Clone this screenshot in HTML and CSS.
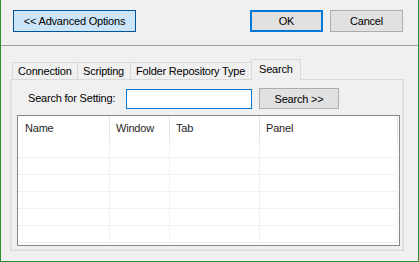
FILE: index.html
```html
<!DOCTYPE html>
<html lang="en">
<head>
    <meta charset="UTF-8">
    <title>Advanced Options</title>
    <link rel="stylesheet" href="styles.css">
</head>
<body>
    <div class="window">
        <!-- Dialog buttons -->
        <div class="topbar">
            <button class="btn btn-toggle">&lt;&lt; Advanced Options</button>
            <div class="actions">
                <button class="btn btn-default">OK</button>
                <button class="btn">Cancel</button>
            </div>
        </div>
        <div class="separator"></div>

        <!-- Tab control -->
        <div class="tabs">
            <div class="tabstrip">
                <div class="tab tab-connection">Connection</div>
                <div class="tab tab-scripting">Scripting</div>
                <div class="tab tab-folder">Folder Repository Type</div>
                <div class="tab tab-search selected">Search</div>
            </div>
            <div class="tabpage">
                <div class="search-row">
                    <label for="setting" class="search-label">Search for Setting:</label>
                    <input type="text" id="setting" class="search-input">
                    <button class="btn btn-search">Search &gt;&gt;</button>
                </div>
                <div class="listview">
                    <div class="lv-header">
                        <div class="lv-col">Name</div>
                        <div class="lv-col">Window</div>
                        <div class="lv-col">Tab</div>
                        <div class="lv-col">Panel</div>
                    </div>
                    <div class="lv-row"><div></div><div></div><div></div><div></div></div>
                    <div class="lv-row"><div></div><div></div><div></div><div></div></div>
                    <div class="lv-row"><div></div><div></div><div></div><div></div></div>
                    <div class="lv-row"><div></div><div></div><div></div><div></div></div>
                    <div class="lv-row"><div></div><div></div><div></div><div></div></div>
                    <div class="lv-row"><div></div><div></div><div></div><div></div></div>
                </div>
            </div>
        </div>
    </div>
</body>
</html>
```

FILE: styles.css
```css
/* Dialog window */
body {
    margin: 0;
    padding: 0;
    font-family: "Liberation Sans", Arial, sans-serif;
    font-size: 11px;
    letter-spacing: -0.2px;
    color: #000;
}
.window {
    width: 419px;
    height: 262px;
    box-sizing: border-box;
    background-color: #f0f0f0;
    border: 1px solid #2e8b2e;
    border-top: none;
}

/* Buttons */
.btn {
    font-family: inherit;
    font-size: 11px;
    letter-spacing: inherit;
    color: #000;
    background-color: #e1e1e1;
    border: 1px solid #adadad;
    padding: 0;
    margin: 0;
    height: 22px;
    box-sizing: border-box;
}
.topbar {
    height: 45px;
    box-sizing: border-box;
    padding: 10px 15px 0 12px;
    display: flex;
    justify-content: space-between;
    align-items: flex-start;
}
.btn-toggle {
    width: 123px;
    background-color: #cce4f7;
    border-color: #005499;
}
.actions {
    display: flex;
    gap: 7px;
}
.actions .btn {
    width: 73px;
}
.btn-default {
    border: 2px solid #0078d7;
}
.separator {
    height: 1px;
    background-color: #a0a0a0;
}

/* Tabs */
.tabs {
    margin: 13px 0 0 9px;
    width: 394px;
}
.tabstrip {
    height: 20px;
    display: flex;
    align-items: flex-end;
    padding-left: 2px;
}
.tab {
    height: 17px;
    box-sizing: border-box;
    border: 1px solid #d9d9d9;
    border-bottom: none;
    border-right: none;
    padding-left: 5px;
    line-height: 16px;
    white-space: nowrap;
    overflow: hidden;
}
.tab-connection { width: 65px; }
.tab-scripting { width: 53px; }
.tab-folder { width: 121px; }
.tab.selected {
    width: 50px;
    height: 21px;
    margin-bottom: -1px;
    border-right: 1px solid #d9d9d9;
    background-color: #f0f0f0;
    position: relative;
    z-index: 1;
    padding-left: 7px;
    line-height: 19px;
}
.tabpage {
    height: 172px;
    box-sizing: border-box;
    border: 1px solid #d9d9d9;
    box-shadow: inset 1px 0 0 #e6e6e6, inset -1px 0 0 #e6e6e6, inset 0 -1px 0 #e6e6e6;
}

/* Search row */
.search-row {
    display: flex;
    align-items: flex-start;
    padding: 8px 0 0 17px;
}
.search-label {
    width: 98px;
    line-height: 21px;
}
.search-input {
    width: 126px;
    height: 20px;
    box-sizing: border-box;
    margin: 1px 0 0 0;
    padding: 0 3px;
    border: 1px solid #0078d7;
    background-color: #fff;
    font-family: inherit;
    font-size: 11px;
    outline: none;
}
.btn-search {
    width: 80px;
    height: 21px;
    margin-left: 7px;
}

/* List view */
.listview {
    margin: 6px 0 0 6px;
    width: 383px;
    height: 131px;
    box-sizing: border-box;
    border: 1px solid #828790;
    background-color: #fff;
}
.lv-header,
.lv-row {
    display: grid;
    grid-template-columns: 92px 60px 90px 138px;
    width: 380px;
}
.lv-header {
    height: 25px;
}
.lv-col {
    border-right: 1px solid #e5e5e5;
    padding-left: 6px;
    line-height: 25px;
    color: #1e1e1e;
}
.lv-col:first-child {
    padding-left: 7px;
}
.lv-row {
    height: 17px;
    box-sizing: border-box;
    border-bottom: 1px solid #f0f0f0;
}
.lv-row div {
    border-right: 1px solid #f0f0f0;
}
```
